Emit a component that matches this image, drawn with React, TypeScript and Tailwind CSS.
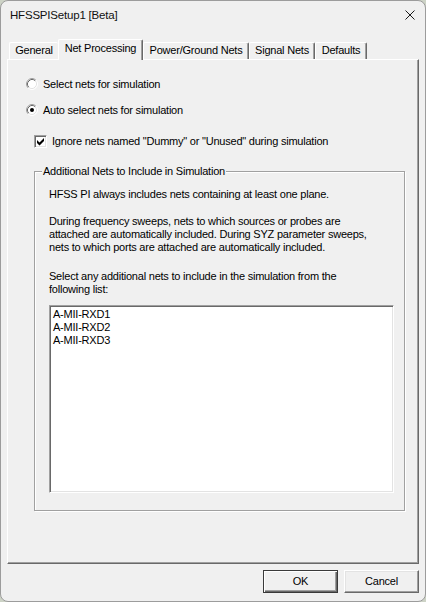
import React from "react";

// Classic Win32-style property sheet: "Net Processing" page of HFSSPISetup1.

function Radio({ checked = false }: { checked?: boolean }) {
  return (
    <svg width="12" height="12" viewBox="0 0 12 12" className="shrink-0">
      <circle cx="6" cy="6" r="5" fill="#ffffff" />
      <path d="M2.11 9.89A5.5 5.5 0 0 1 9.89 2.11" stroke="#a0a0a0" fill="none" />
      <path d="M9.89 2.11A5.5 5.5 0 0 1 2.11 9.89" stroke="#ffffff" fill="none" />
      <path d="M2.82 9.18A4.5 4.5 0 0 1 9.18 2.82" stroke="#696969" fill="none" />
      <path d="M9.18 2.82A4.5 4.5 0 0 1 2.82 9.18" stroke="#e3e3e3" fill="none" />
      {checked && <circle cx="6" cy="6" r="2" fill="#000000" />}
    </svg>
  );
}

function CheckBox({ checked = false }: { checked?: boolean }) {
  return (
    <span className="flex h-[13px] w-[13px] shrink-0 items-center justify-center border border-t-[#a0a0a0] border-l-[#a0a0a0] border-r-white border-b-white bg-white shadow-[inset_1px_1px_0_#696969,inset_-1px_-1px_0_#e3e3e3]">
      {checked && (
        <svg width="7" height="7" viewBox="0 0 7 7" className="overflow-visible">
          <path d="M0 2L2.5 4.5L7 0V3L2.5 7.5L0 5Z" fill="#000000" />
        </svg>
      )}
    </span>
  );
}

type TabDef = { label: string; w: string; active?: boolean; hideRight?: boolean };

const tabs: TabDef[] = [
  { label: "General", w: "w-[49px]", hideRight: true },
  { label: "Net Processing", w: "w-[85px]", active: true },
  { label: "Power/Ground Nets", w: "w-[106px]" },
  { label: "Signal Nets", w: "w-[66px]" },
  { label: "Defaults", w: "w-[52px]" },
];

function Tab({ t }: { t: TabDef }) {
  if (t.active) {
    return (
      <div
        className={`relative z-10 -mb-px flex h-[21px] ${t.w} items-start justify-center rounded-tl-[2px] rounded-tr-[2px] border-l border-t border-r border-l-white border-t-white border-r-[#696969] bg-[#f0f0f0] pt-[2px] shadow-[inset_-1px_0_0_#a0a0a0] whitespace-nowrap`}
      >
        {t.label}
      </div>
    );
  }
  return (
    <div
      className={`flex h-[17px] ${t.w} items-start justify-center rounded-tl-[2px] rounded-tr-[2px] border-l border-t border-l-white border-t-white ${
        t.hideRight ? "" : "border-r border-r-[#696969] shadow-[inset_-1px_0_0_#a0a0a0]"
      } bg-[#f0f0f0] pt-[1px] whitespace-nowrap`}
    >
      {t.label}
    </div>
  );
}

export default function App() {
  return (
    <div className="h-[602px] w-[426px] bg-[#cdd3c6] font-['Liberation_Sans',Arial,sans-serif] text-[11px] leading-[13px] tracking-[-0.22px] text-black">
      <div className="flex h-full flex-col overflow-hidden rounded-[8px] border border-[#9c9c9c] bg-[#f0f0f0]">
        {/* title bar */}
        <div className="flex h-[30px] shrink-0 items-center justify-between pb-[2px] pl-[9px] pr-[10px]">
          <span className="text-[11.5px] tracking-[-0.2px] text-[#111]">HFSSPISetup1 [Beta]</span>
          <svg width="10" height="10" viewBox="0 0 10 10">
            <path d="M0.5 0.5L9.5 9.5M9.5 0.5L0.5 9.5" stroke="#1a1a1a" strokeWidth="1" />
          </svg>
        </div>

        <div className="flex flex-1 flex-col px-[6px] pb-[8px] pt-[8px]">
          {/* tab strip */}
          <div className="flex h-[20px] items-end pl-[2px]">
            {tabs.map((t) => (
              <Tab key={t.label} t={t} />
            ))}
          </div>

          {/* page */}
          <div className="flex flex-1 flex-col border-l border-t border-r border-b border-l-white border-t-white border-r-[#696969] border-b-[#696969] pt-[17px] shadow-[inset_-1px_-1px_0_#a0a0a0]">
            <div className="ml-[18px] flex h-[14px] items-center gap-[5px]">
              <Radio />
              <span>Select nets for simulation</span>
            </div>
            <div className="ml-[18px] mt-[12px] flex h-[14px] items-center gap-[5px]">
              <Radio checked />
              <span>Auto select nets for simulation</span>
            </div>
            <div className="ml-[26px] mt-[17px] flex h-[14px] items-center gap-[5px]">
              <CheckBox checked />
              <span>Ignore nets named "Dummy" or "Unused" during simulation</span>
            </div>

            {/* group box */}
            <div className="ml-[26px] mt-[23px] flex h-[340px] w-[371px] flex-col border border-[#a0a0a0] shadow-[inset_1px_1px_0_#ffffff,1px_1px_0_#ffffff]">
              <span className="-mt-[7px] ml-[7px] w-fit bg-[#f0f0f0] px-[1px] whitespace-nowrap">
                Additional Nets to Include in Simulation
              </span>
              <div className="flex flex-col pl-[14px]">
                <p className="mt-[10px] whitespace-nowrap">HFSS PI always includes nets containing at least one plane.</p>
                <p className="mt-[14px] whitespace-nowrap">
                  During frequency sweeps, nets to which sources or probes are
                  <br />
                  attached are automatically included. During SYZ parameter sweeps,
                  <br />
                  nets to which ports are attached are automatically included.
                </p>
                <p className="mt-[16px] whitespace-nowrap">
                  Select any additional nets to include in the simulation from the
                  <br />
                  following list:
                </p>
                <div className="mt-[9px] flex h-[188px] w-[345px] flex-col border border-t-[#a0a0a0] border-l-[#a0a0a0] border-r-white border-b-white bg-white pl-[3px] pt-[2px] shadow-[inset_1px_1px_0_#696969,inset_-1px_-1px_0_#e3e3e3]">
                  <span>A-MII-RXD1</span>
                  <span>A-MII-RXD2</span>
                  <span>A-MII-RXD3</span>
                </div>
              </div>
            </div>
          </div>

          {/* buttons */}
          <div className="mt-[6px] flex justify-end gap-[6px]">
            <button className="flex h-[23px] w-[75px] items-center justify-center border border-[#3a3a3a] bg-[#f0f0f0] shadow-[inset_1px_1px_0_#ffffff,inset_-1px_-1px_0_#696969,inset_-2px_-2px_0_#a0a0a0]">
              OK
            </button>
            <button className="flex h-[23px] w-[75px] items-center justify-center border border-t-white border-l-white border-r-[#696969] border-b-[#696969] bg-[#f0f0f0] shadow-[inset_-1px_-1px_0_#a0a0a0,inset_1px_1px_0_#e3e3e3]">
              Cancel
            </button>
          </div>
        </div>
      </div>
    </div>
  );
}
